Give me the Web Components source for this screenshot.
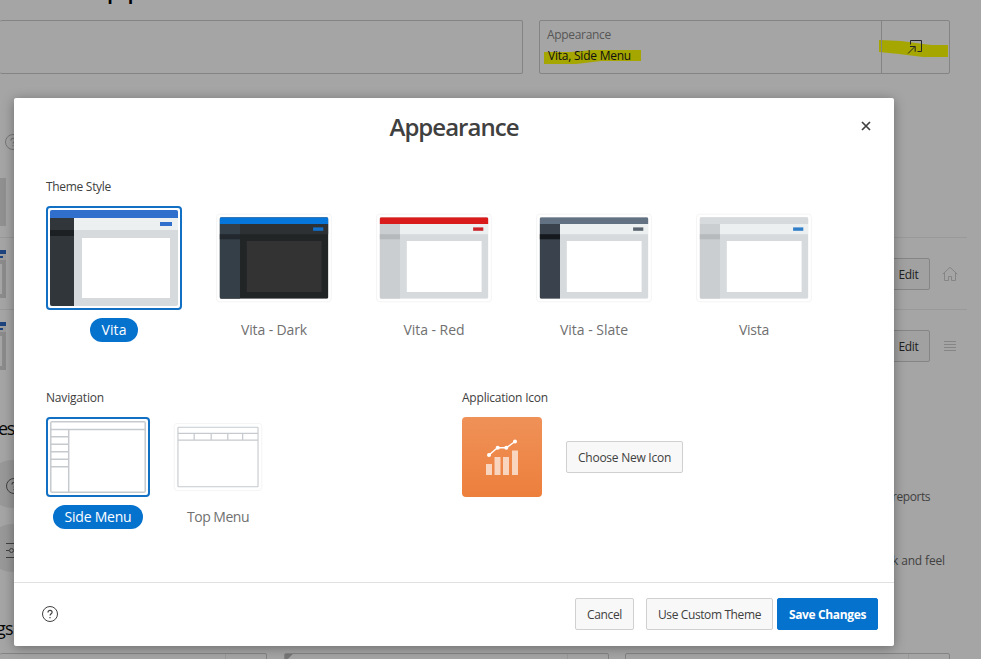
<!DOCTYPE html>
<html lang="en">
<head>
<meta charset="utf-8">
<title>Appearance</title>
<style>
html,body{margin:0;height:100%;overflow:hidden}
body{font-family:"Open Sans","Noto Sans",sans-serif;font-size:12px;color:#404040;background:#a5a5a5}
</style>
</head>
<body>
<app-shell></app-shell>
<script>
const define = (name, html, setup) => customElements.define(name, class extends HTMLElement {
  connectedCallback() {
    if (this.shadowRoot) return;
    const t = document.createElement('template');
    t.innerHTML = typeof html === 'function' ? html(this) : html;
    this.attachShadow({mode: 'open'}).append(t.content.cloneNode(true));
    if (setup) setup(this);
  }
});

/* A single line of text whose tracking is adjusted to fill the width in "w". */
define('fit-text', el => `<style>
:host{display:inline-block;width:${el.getAttribute('w')}px;white-space:nowrap;flex:none}
span{display:inline-block}</style><span>${el.getAttribute('label')}</span>`, el => {
  const s = el.shadowRoot.querySelector('span');
  const n = s.textContent.length;
  const diff = Number(el.getAttribute('w')) - s.getBoundingClientRect().width;
  s.style.letterSpacing = (diff / n).toFixed(3) + 'px';
});

const icons = {
  close: '<path d="M4 4l8 8M12 4l-8 8" stroke-width="1.7"/>',
  help: '<circle cx="8" cy="8" r="7.5"/><path d="M6 6.4c0-1.3.9-2 2-2s2.1.7 2.1 1.9c0 1.4-2 1.5-2 3.1M8 10.9v1.3" stroke-width="1.2"/>',
  popup: '<path d="M3.5 5.5v-4h11v11h-4M1 14.5l7-7M3 7.5h5.2v5.2"/>',
  home: '<path d="M.7 8.2L8 1.3l7.3 6.9M2.5 6.7v7.8h4v-4h3v4h4V6.7"/>',
  lines: '<path d="M2 3.5h12M2 6.5h12M2 9.5h12M2 12.5h12"/>',
  sliders: '<path d="M0 1.5h16M0 8.5h3M8 8.5h8M0 15.5h16"/><circle cx="5.5" cy="8.5" r="2"/>'
};
define('ui-icon', el => `<style>:host{display:block;width:16px;height:16px;flex:none}svg{display:block}</style>
<svg width="16" height="16" viewBox="0 0 16 16" fill="none" stroke="currentColor" stroke-width="1">${icons[el.getAttribute('name')]}</svg>`);

define('ui-button', `<style>
:host{display:flex;box-sizing:border-box;height:32px;padding:0 11px;align-items:center;justify-content:center;border:1px solid #d0d0d0;border-radius:2px;background:#f8f8f8;flex:none}
:host([hot]){background:#0572ce;border-color:#0572ce;color:#fff;font-weight:700}
:host([dim]){background:#a1a1a1;border-color:#858585;color:#202020;padding-top:1px}
</style><slot></slot>`);

const palettes = {
  vita:  ['#3070cc','#303639','#1c2022','#ecf0f0','#d6dadc','#fff','#3070cc'],
  dark:  ['#0776db','#353f48','#22282d','#2d3133','#222526','#333','#1270cb'],
  red:   ['#da1b1b','#caced1','#b5b9bb','#edf0f0','#d6dadc','#fff','#ca242b'],
  slate: ['#637282','#3a434d','#15191d','#edf0f0','#d6dadc','#fff','#5a6570'],
  vista: ['#d6dadc','#caced1','#b6babc','#edf0f0','#d6dadc','#fff','#307fc8']
};
const layouts = {
  side: '<path d="M.8.8h94.4v70.4H.8zM.8 8.5h94.4M18.7 8.5v62.7M.8 15.8h17.9M.8 23.2h17.9M.8 30.7h17.9M.8 38.2h17.9M.8 45.7h17.9"/>',
  top: '<path d="M.8.8h94.4v70.4H.8zM.8 8.3h94.4M.8 16.2h94.4M20 8.3v8M40 8.3v8M59.5 8.3v8M77 8.3v8"/>'
};
const art = el => {
  const p = palettes[el.getAttribute('theme')];
  if (!p) return `<svg width="96" height="72" fill="none" stroke="#c6cace" stroke-width="1.5">${layouts[el.getAttribute('layout')]}</svg>`;
  return `<svg width="128" height="96"><rect width="128" height="96" fill="${p[4]}"/><rect width="128" height="8" fill="${p[0]}"/>
<rect y="8" width="24" height="88" fill="${p[1]}"/><rect y="20" width="24" height="6" fill="${p[2]}"/>
<rect x="24" y="8" width="104" height="12" fill="${p[3]}"/><rect x="110" y="12" width="12" height="4" fill="${p[6]}"/>
<rect x="32" y="28" width="88" height="60" fill="${p[5]}"/></svg>`;
};
define('option-card', el => `<style>
:host{display:flex;flex-direction:column;align-items:center;gap:8px;font-size:14px;color:#707070}
.frame{padding:3px;border:1px solid #f2f2f2;border-radius:4px;transform:scale(.85)}
.frame svg{display:block;border-radius:2px}
.label{box-sizing:border-box;height:24px;padding:0 11.5px 1px;border-radius:12px;display:flex;align-items:center}
:host([selected]) .frame{transform:none;padding:2px;border:2px solid #1170c4}
:host([selected]) .label{background:#0572ce;color:#fff}
</style><div class="frame">${art(el)}</div><div class="label"><slot></slot></div>`);

define('option-group', `<style>
:host{display:block}.row{display:flex;gap:var(--gap,24px);margin-top:11px}
.title{height:17px;display:flex;align-items:center}
</style><div class="title"><slot name="title"></slot></div><div class="row"><slot></slot></div>`);

define('app-icon', `<style>
:host{display:block;width:80px;height:80px;border-radius:4px;background:linear-gradient(#ef9158,#ed7f3c);flex:none}svg{display:block}
</style><svg width="80" height="80"><g fill="#fff" fill-opacity=".65"><path d="M24 47h6v11h-6zM32.5 40h6v18h-6zM41 40h6v18h-6zM50 33.5h6V58h-6z"/></g>
<path d="M27 38l8.5-7.3h9L53 24.5" fill="none" stroke="#fff" stroke-width="1.4"/><g fill="#fff"><circle cx="27" cy="38" r="2"/><circle cx="35.7" cy="30.7" r="2"/><circle cx="44.3" cy="30.7" r="2"/><circle cx="53" cy="24.5" r="2"/></g></svg>`);

define('modal-dialog', `<style>
:host{position:absolute;left:14px;top:98px;width:880px;height:548px;background:#fff;border-radius:2px;box-shadow:0 2px 12px rgba(0,0,0,.35);display:flex;flex-direction:column}
header{height:60px;display:grid;grid-template-columns:1fr auto 1fr;align-items:center;font-size:24px;font-weight:600;box-sizing:border-box;padding-bottom:3px}
header ui-icon{justify-self:end;margin-right:20px;margin-top:-1px}
main{flex:1;padding:20px 32px 0}
footer{box-sizing:border-box;height:64px;border-top:1px solid #e0e0e0;display:flex;align-items:center;padding:0 16px 1px 28px}
footer ui-icon{margin-right:auto}
</style><header><span></span><slot name="heading"></slot><ui-icon name="close"></ui-icon></header>
<main><slot></slot></main><footer><ui-icon name="help"></ui-icon><slot name="actions"></slot></footer>`);

define('appearance-dialog', `<style>
:host{display:contents}
.lower{display:grid;grid-template-columns:416px 1fr;margin-top:47px}
.pick{display:flex;align-items:center;gap:24px}
.actions{display:flex}
</style><modal-dialog>
<fit-text slot="heading" label="Appearance" w="129"></fit-text>
<option-group><fit-text slot="title" label="Theme Style" w="65"></fit-text>
<option-card theme="vita" selected><fit-text label="Vita" w="25"></fit-text></option-card>
<option-card theme="dark"><fit-text label="Vita - Dark" w="66"></fit-text></option-card>
<option-card theme="red"><fit-text label="Vita - Red" w="61"></fit-text></option-card>
<option-card theme="slate"><fit-text label="Vita - Slate" w="68"></fit-text></option-card>
<option-card theme="vista"><fit-text label="Vista" w="30"></fit-text></option-card></option-group>
<div class="lower">
<option-group style="--gap:16px"><fit-text slot="title" label="Navigation" w="58"></fit-text>
<option-card layout="side" selected><fit-text label="Side Menu" w="67"></fit-text></option-card>
<option-card layout="top"><fit-text label="Top Menu" w="62"></fit-text></option-card></option-group>
<option-group><fit-text slot="title" label="Application Icon" w="86"></fit-text>
<div class="pick"><app-icon></app-icon><ui-button><fit-text label="Choose New Icon" w="93"></fit-text></ui-button></div></option-group>
</div>
<div slot="actions" class="actions">
<ui-button style="margin-right:12px"><fit-text label="Cancel" w="35"></fit-text></ui-button>
<ui-button style="margin-right:4px"><fit-text label="Use Custom Theme" w="103"></fit-text></ui-button>
<ui-button hot><fit-text label="Save Changes" w="77"></fit-text></ui-button></div>
</modal-dialog>`);

define('form-field', `<style>
:host{display:flex;box-sizing:border-box;height:54px;border:1px solid #848484;border-radius:2px}
.body{flex:1}.end{width:67px;border-left:1px solid #848484;display:flex;align-items:center;justify-content:center;color:#242424}
::slotted(ui-icon){margin-right:2px}
:host([plain]) .end{display:none}:host([narrow]) .end{width:40px;border-color:#999}
</style><div class="body"><slot></slot></div><div class="end"><slot name="end"></slot></div>`);

define('page-row', `<style>
:host{display:flex;box-sizing:border-box;height:72px;width:967px;border-top:1px solid #999;align-items:center;color:#858585}
.thumb{width:6px;height:48px;margin-right:auto}
svg{display:block}
ui-button{width:43px;margin-right:12px}
::slotted(ui-icon){margin-right:9px}
</style><svg class="thumb" width="6" height="48"><rect width="6" height="48" fill="#8b8b8b"/><rect width="6" height="4" fill="#1d447e"/><rect y="4" width="6" height="6" fill="#9c9c9c"/><rect y="6" width="3" height="2" fill="#1d447e"/><rect y="14" width="2" height="30" fill="#a5a5a5"/></svg>
<ui-button dim><fit-text label="Edit" w="20"></fit-text></ui-button><slot></slot>`);

define('feature-row', `<style>
:host{display:flex;align-items:center;height:48px;margin-bottom:16px;color:#414141}
.disc{width:48px;height:48px;margin-left:-12px;border-radius:50%;background:#989898;display:flex;align-items:center;justify-content:center;margin-right:auto}
::slotted([slot=icon]){margin:3px 0 0 4px}
</style><div class="disc"><slot name="icon"></slot></div><slot></slot>`);

define('builder-page', `<style>
:host{display:block;width:981px;height:659px;overflow:hidden;background:#a5a5a5;color:#414141}
.title{display:flex;align-items:flex-start;height:20px;padding-left:85px;color:#000;font-size:32px;line-height:32px}
.title fit-text{margin-top:-32px}
.fields{display:grid;grid-template-columns:523px 411px;gap:16px}
.stack{display:flex;flex-direction:column;padding:5px 7px;gap:3px;line-height:18px;color:#565656}
.stack fit-text:last-child{color:#101010;margin-left:1px}
.marked{position:relative}
.marked>svg{position:absolute;left:0;top:0}
.marked form-field{position:relative}
.help{height:44px;padding:60px 0 0 5px;color:#777}
.block{width:6px;height:48px;background:#909090}
.rows{margin-top:11px}
h2{margin:0;font-size:18px;font-weight:400;color:#080808;line-height:24px;height:24px}
.bottom{display:grid;grid-template-columns:267px 325px 325px;column-gap:17px;margin-top:13px}
.bottom form-field:nth-child(2){background:linear-gradient(135deg,#777 5px,transparent 6px)}
.bottom form-field:last-child{margin-left:-1px;margin-right:1px}
</style>
<div class="title"><fit-text label="App" w="62"></fit-text></div>
<div class="fields"><form-field plain style="border-left:0"></form-field>
<div class="marked"><svg width="411" height="54"><path fill="#a6a600" d="M5 32h27l22-2h48v11H62l-25 3H5zM340 20l22 1 30 4h17v12h-25l-24-3-20-2z"/></svg>
<form-field><div class="stack"><fit-text label="Appearance" w="64"></fit-text><fit-text label="Vita, Side Menu" w="83"></fit-text></div><ui-icon slot="end" name="popup"></ui-icon></form-field></div></div>
<div class="help"><ui-icon name="help"></ui-icon></div><div class="block"></div>
<div class="rows"><page-row><ui-icon name="home"></ui-icon></page-row><page-row><ui-icon name="lines"></ui-icon></page-row></div>
<h2 style="margin-top:35px"><fit-text label="es" w="16" style="margin-left:-2px"></fit-text></h2>
<div style="margin-top:20px"><feature-row><ui-icon slot="icon" name="help"></ui-icon><fit-text label="reports" w="38" style="margin:24px 51px 0 0"></fit-text></feature-row>
<feature-row><ui-icon slot="icon" name="sliders"></ui-icon><fit-text label="k and feel" w="53" style="margin:24px 36px 0 0"></fit-text></feature-row></div>
<h2 style="margin-top:44px"><fit-text label="gs" w="17" style="margin-left:-4px"></fit-text></h2>
<div class="bottom"><form-field narrow style="border-left:0"></form-field><form-field narrow></form-field><form-field narrow></form-field></div>`);

define('app-shell', `<style>:host{display:block;position:relative;width:981px;height:659px;overflow:hidden}</style>
<builder-page></builder-page><appearance-dialog></appearance-dialog>`);
</script>
</body>
</html>
